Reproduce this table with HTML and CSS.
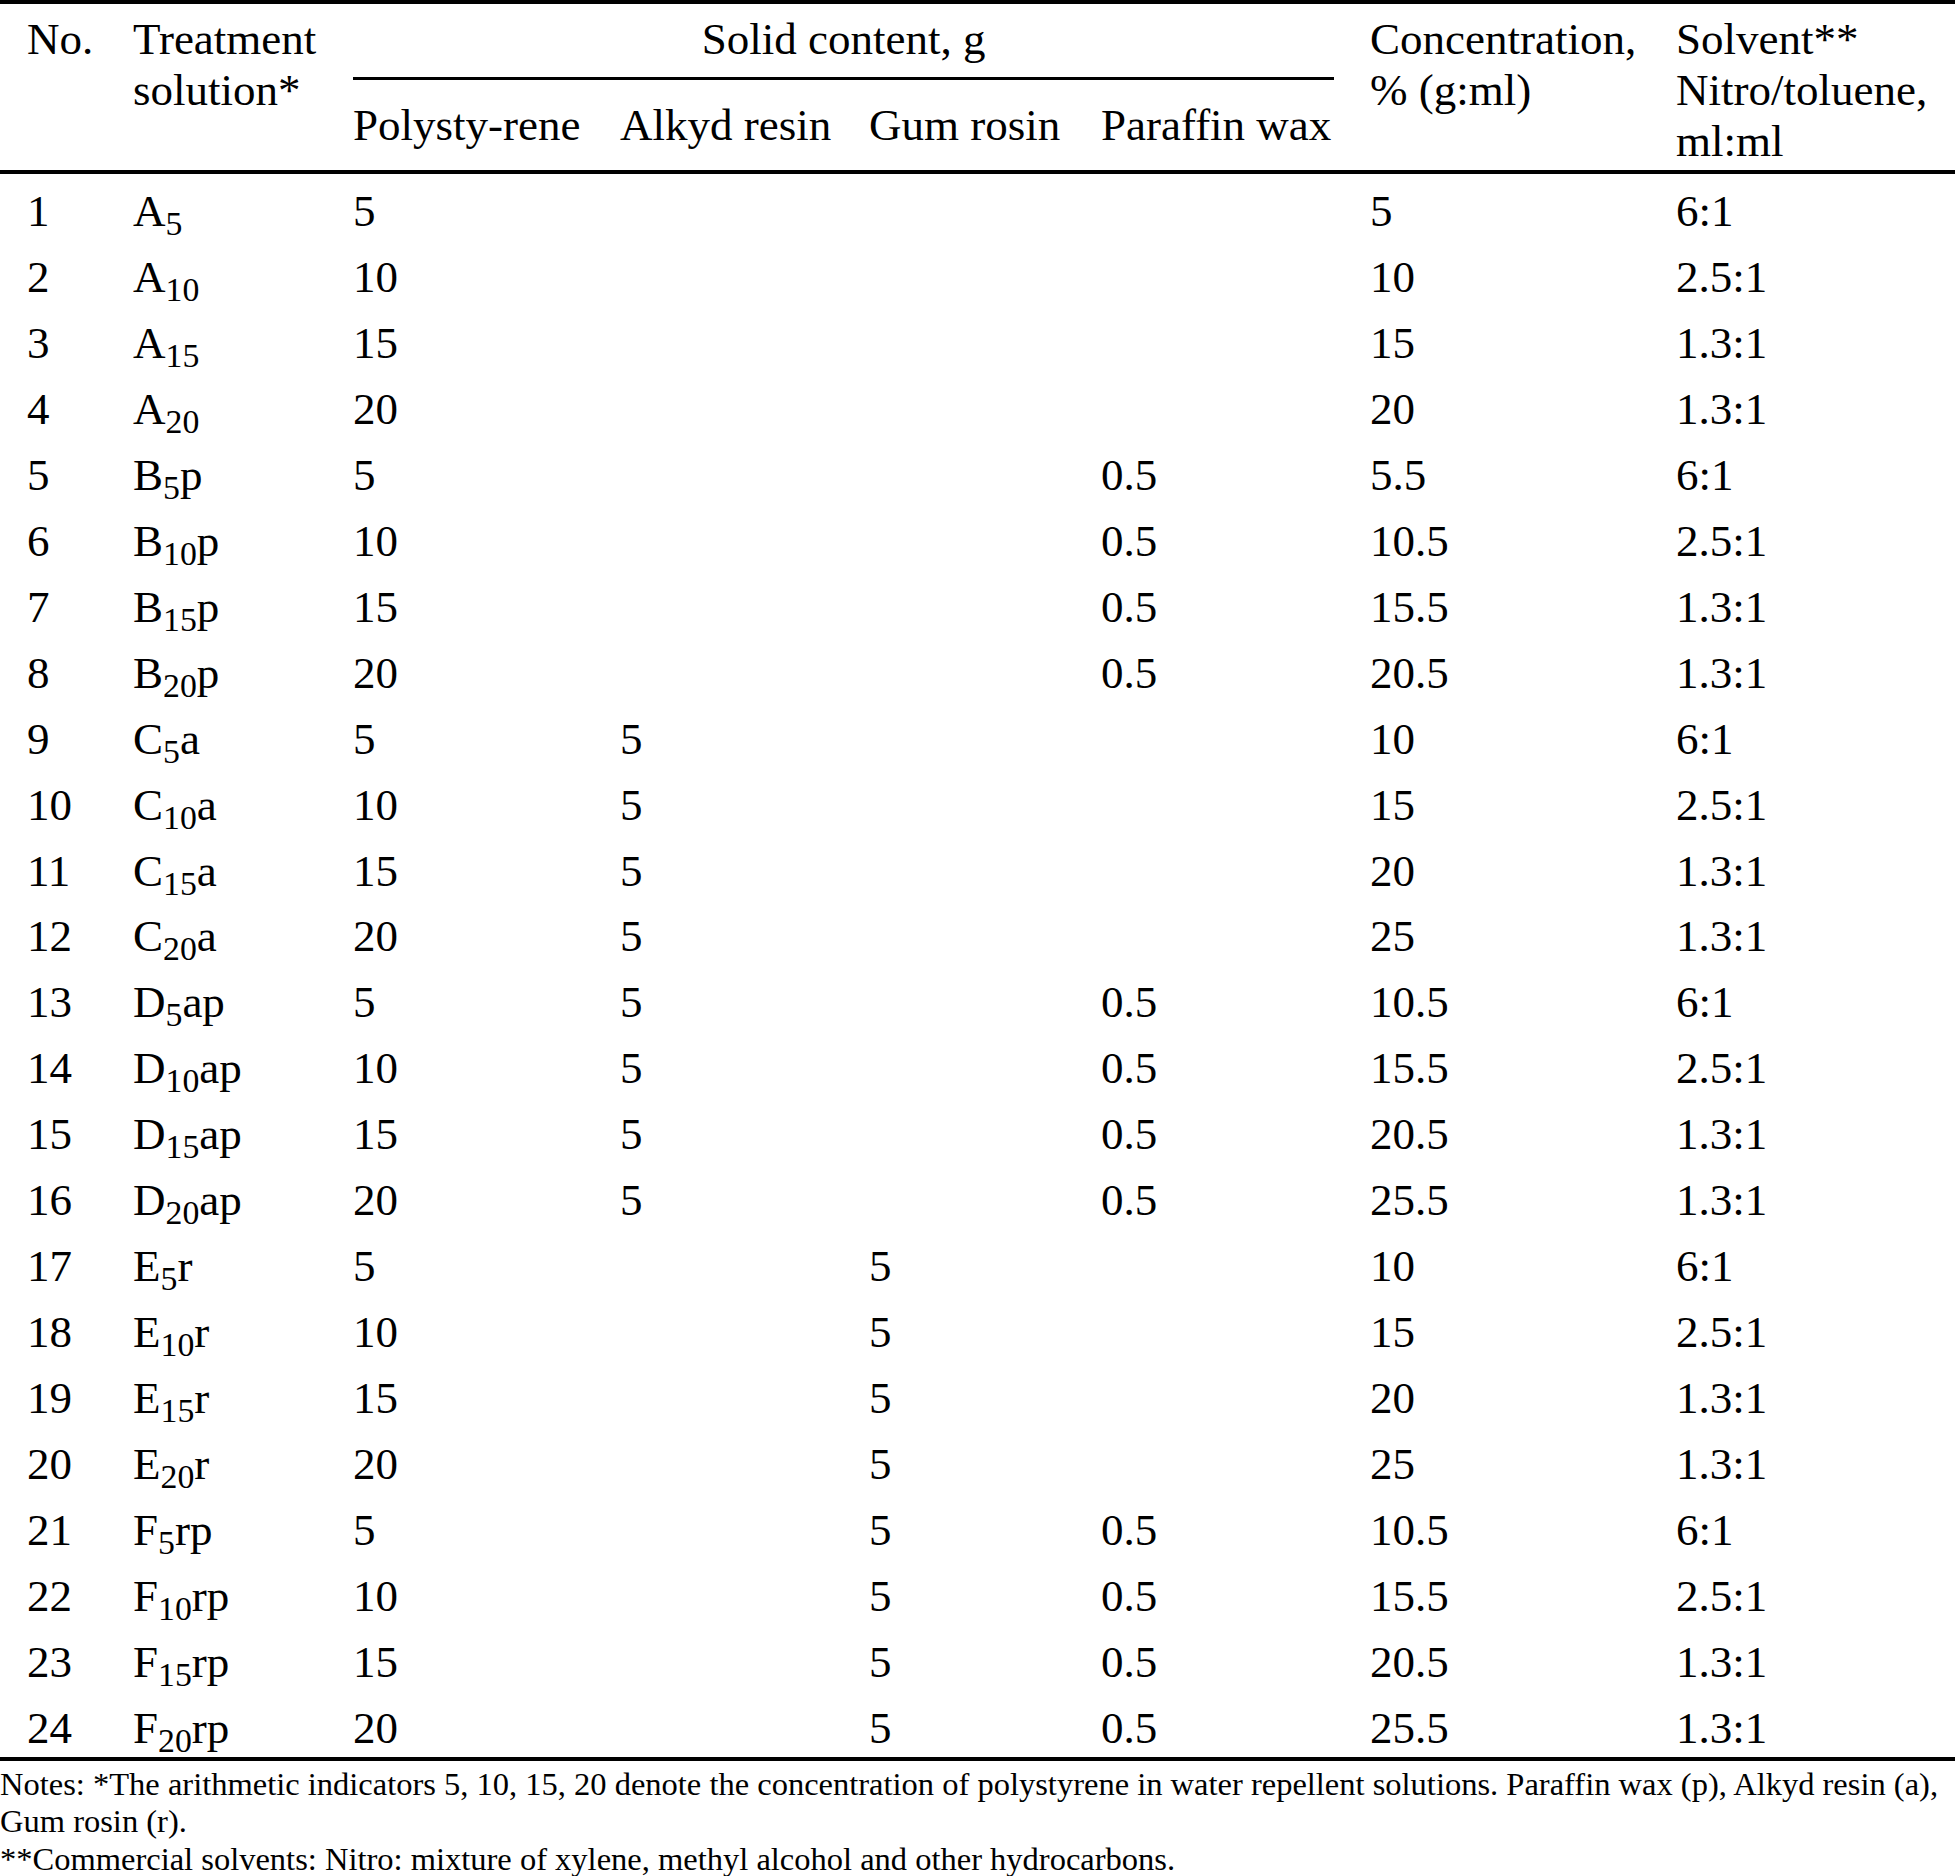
FILE: index.html
```html
<!DOCTYPE html>
<html lang="en">
<head>
<meta charset="utf-8">
<title>Treatment solutions</title>
<link rel="stylesheet" href="styles.css">
</head>
<body>
<div class="page">
<table class="data">
  <colgroup>
    <col class="w-no"><col class="w-treat"><col class="w-poly"><col class="w-alkyd"><col class="w-gum"><col class="w-paraffin"><col class="w-conc"><col class="w-solvent">
  </colgroup>
  <thead>
    <tr>
      <th rowspan="2" class="first span">No.</th>
      <th rowspan="2" class="span">Treatment<br>solution*</th>
      <th colspan="4" class="group"><div class="group-label">Solid content, g</div></th>
      <th rowspan="2" class="span">Concentration,<br>% (g:ml)</th>
      <th rowspan="2" class="span">Solvent**<br>Nitro/toluene,<br>ml:ml</th>
    </tr>
    <tr class="sub-head">
      <th>Polysty-rene</th>
      <th>Alkyd resin</th>
      <th>Gum rosin</th>
      <th>Paraffin wax</th>
    </tr>
  </thead>
  <tbody>
    <tr><td class="first">1</td><td>A<sub>5</sub></td><td>5</td><td></td><td></td><td></td><td>5</td><td>6:1</td></tr>
    <tr><td class="first">2</td><td>A<sub>10</sub></td><td>10</td><td></td><td></td><td></td><td>10</td><td>2.5:1</td></tr>
    <tr><td class="first">3</td><td>A<sub>15</sub></td><td>15</td><td></td><td></td><td></td><td>15</td><td>1.3:1</td></tr>
    <tr><td class="first">4</td><td>A<sub>20</sub></td><td>20</td><td></td><td></td><td></td><td>20</td><td>1.3:1</td></tr>
    <tr><td class="first">5</td><td>B<sub>5</sub>p</td><td>5</td><td></td><td></td><td>0.5</td><td>5.5</td><td>6:1</td></tr>
    <tr><td class="first">6</td><td>B<sub>10</sub>p</td><td>10</td><td></td><td></td><td>0.5</td><td>10.5</td><td>2.5:1</td></tr>
    <tr><td class="first">7</td><td>B<sub>15</sub>p</td><td>15</td><td></td><td></td><td>0.5</td><td>15.5</td><td>1.3:1</td></tr>
    <tr><td class="first">8</td><td>B<sub>20</sub>p</td><td>20</td><td></td><td></td><td>0.5</td><td>20.5</td><td>1.3:1</td></tr>
    <tr><td class="first">9</td><td>C<sub>5</sub>a</td><td>5</td><td>5</td><td></td><td></td><td>10</td><td>6:1</td></tr>
    <tr><td class="first">10</td><td>C<sub>10</sub>a</td><td>10</td><td>5</td><td></td><td></td><td>15</td><td>2.5:1</td></tr>
    <tr><td class="first">11</td><td>C<sub>15</sub>a</td><td>15</td><td>5</td><td></td><td></td><td>20</td><td>1.3:1</td></tr>
    <tr><td class="first">12</td><td>C<sub>20</sub>a</td><td>20</td><td>5</td><td></td><td></td><td>25</td><td>1.3:1</td></tr>
    <tr><td class="first">13</td><td>D<sub>5</sub>ap</td><td>5</td><td>5</td><td></td><td>0.5</td><td>10.5</td><td>6:1</td></tr>
    <tr><td class="first">14</td><td>D<sub>10</sub>ap</td><td>10</td><td>5</td><td></td><td>0.5</td><td>15.5</td><td>2.5:1</td></tr>
    <tr><td class="first">15</td><td>D<sub>15</sub>ap</td><td>15</td><td>5</td><td></td><td>0.5</td><td>20.5</td><td>1.3:1</td></tr>
    <tr><td class="first">16</td><td>D<sub>20</sub>ap</td><td>20</td><td>5</td><td></td><td>0.5</td><td>25.5</td><td>1.3:1</td></tr>
    <tr><td class="first">17</td><td>E<sub>5</sub>r</td><td>5</td><td></td><td>5</td><td></td><td>10</td><td>6:1</td></tr>
    <tr><td class="first">18</td><td>E<sub>10</sub>r</td><td>10</td><td></td><td>5</td><td></td><td>15</td><td>2.5:1</td></tr>
    <tr><td class="first">19</td><td>E<sub>15</sub>r</td><td>15</td><td></td><td>5</td><td></td><td>20</td><td>1.3:1</td></tr>
    <tr><td class="first">20</td><td>E<sub>20</sub>r</td><td>20</td><td></td><td>5</td><td></td><td>25</td><td>1.3:1</td></tr>
    <tr><td class="first">21</td><td>F<sub>5</sub>rp</td><td>5</td><td></td><td>5</td><td>0.5</td><td>10.5</td><td>6:1</td></tr>
    <tr><td class="first">22</td><td>F<sub>10</sub>rp</td><td>10</td><td></td><td>5</td><td>0.5</td><td>15.5</td><td>2.5:1</td></tr>
    <tr><td class="first">23</td><td>F<sub>15</sub>rp</td><td>15</td><td></td><td>5</td><td>0.5</td><td>20.5</td><td>1.3:1</td></tr>
    <tr><td class="first">24</td><td>F<sub>20</sub>rp</td><td>20</td><td></td><td>5</td><td>0.5</td><td>25.5</td><td>1.3:1</td></tr>
  </tbody>
</table>
<div class="notes">
  <p>Notes: *The arithmetic indicators 5, 10, 15, 20 denote the concentration of polystyrene in water repellent solutions. Paraffin wax (p), Alkyd resin (a), Gum rosin (r).</p>
  <p>**Commercial solvents: Nitro: mixture of xylene, methyl alcohol and other hydrocarbons.</p>
</div>
</div>
</body>
</html>
```

FILE: styles.css
```css
html, body {
  margin: 0;
  padding: 0;
  background: #ffffff;
}

.page {
  width: 1955px;
  color: #000000;
  font-family: "Liberation Serif", "Times New Roman", serif;
}

.data {
  width: 1955px;
  table-layout: fixed;
  border-collapse: separate;
  border-spacing: 0;
  border-top: 4px solid #000;
  border-bottom: 4px solid #000;
  font-size: 45px;
}

.w-no { width: 133px; }
.w-treat { width: 220px; }
.w-poly { width: 267px; }
.w-alkyd { width: 249px; }
.w-gum { width: 232px; }
.w-paraffin { width: 269px; }
.w-conc { width: 306px; }
.w-solvent { width: 279px; }

.data th,
.data td {
  padding: 0;
  text-align: left;
  font-weight: normal;
  white-space: nowrap;
}

.data .first {
  padding-left: 27px;
}

.data th {
  line-height: 51px;
  vertical-align: top;
}

.data th.span {
  padding-top: 10px;
  border-bottom: 4px solid #000;
}

.data th.group {
  padding-top: 10px;
}

.group-label {
  text-align: center;
  margin-right: 36px;
  padding-bottom: 12px;
  border-bottom: 3px solid #000;
}

.sub-head th {
  padding-top: 20px;
  padding-bottom: 19px;
  border-bottom: 4px solid #000;
}

.data td {
  height: 65.95px;
  box-sizing: border-box;
  padding-top: 9px;
  line-height: 56.95px;
  vertical-align: top;
}

.data sub {
  font-size: 0.75em;
  line-height: 0;
  vertical-align: -0.28em;
}

.notes {
  padding-top: 5px;
  font-size: 32.5px;
  line-height: 37.5px;
}

.notes p {
  margin: 0;
}
```
